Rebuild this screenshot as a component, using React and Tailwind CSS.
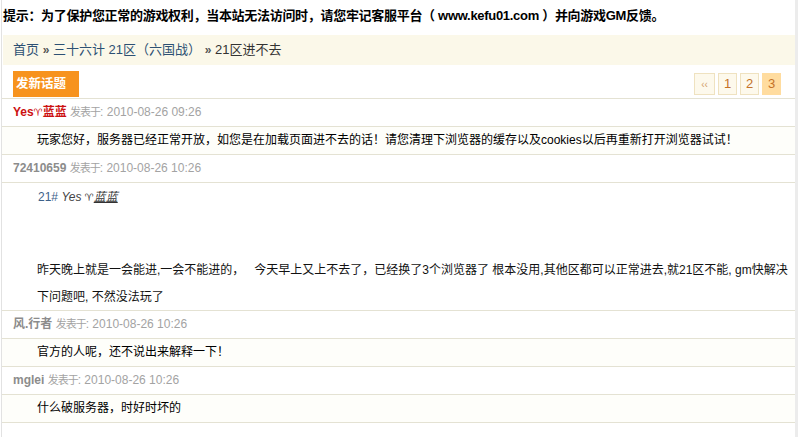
export default function App() {
  const font = "font-['Liberation_Sans','Noto_Sans_CJK_SC',sans-serif]";
  const line = "border-t border-[#e4e2d3]";
  const Aries = ({ cls }) => (
    <span className={`font-['DejaVu_Sans',sans-serif] text-[10px] ${cls}`}>{"\u2648\uFE0E"}</span>
  );
  const Header = ({ name, nameCls, time, children }) => (
    <div className={`${line} h-[28px] pl-[11px] text-[12px] leading-[27px] whitespace-nowrap`}>
      {children ? children : <span className={`font-bold ${nameCls}`}>{name}</span>}
      <span className="text-[#a3a3a3]">
        {" "}
        <span className="text-[11px] tracking-[-1px]">发表于</span>: {time}
      </span>
    </div>
  );
  const Content = ({ children }) => (
    <div className={`${line} h-[28px] bg-[#fefefa] pl-[35px] text-[12px] leading-[27px] text-black whitespace-nowrap`}>
      {children}
    </div>
  );
  return (
    <div className={`w-[798px] h-[437px] bg-white overflow-hidden ${font}`}>
      <div className="ml-[1px] w-[797px] h-[437px] border-l border-l-[#e2e2e2] border-r-[3px] border-r-[#ececec]">
        <div className="h-[35px] pl-[1px] text-[13px] font-bold leading-[32px] tracking-[-0.3px] text-black whitespace-nowrap">
          提示：为了保护您正常的游戏权利，当本站无法访问时，请您牢记客服平台（ www.kefu01.com ）并向游戏GM反馈。
        </div>
        <div className="ml-[1px] h-[30px] bg-[#fbf8e9] pl-[10px] text-[13px] leading-[30px] text-[#2d5073] whitespace-nowrap">
          <span>首页</span> <span className="text-[#555] text-[12px] font-bold">»</span>{" "}
          <span>三十六计 21区（六国战）</span> <span className="text-[#555] text-[12px] font-bold">»</span>{" "}
          <span className="text-[#333]">21区进不去</span>
        </div>
        <div className="h-[33px] flex justify-between items-start pl-[11px] pr-[14px]">
          <div className="mt-[6px] h-[26px] w-[66px] bg-[#f7931e] pl-[3px] text-[12.5px] font-bold leading-[26px] text-white whitespace-nowrap">
            发新话题
          </div>
          <div className="mt-[8px] flex h-[22px] gap-[3px] text-[13px]">
            <div className="flex h-[22px] w-[21px] items-center justify-center border border-[#efe2c0] bg-[#fdf9ec] text-[10px] text-[#d2a06a]">
              ‹‹
            </div>
            <div className="flex h-[22px] w-[19px] items-center justify-center border border-[#efe2c0] bg-[#fdf9ec] text-[#c47228]">
              1
            </div>
            <div className="flex h-[22px] w-[19px] items-center justify-center border border-[#efe2c0] bg-[#fdf9ec] text-[#c47228]">
              2
            </div>
            <div className="flex h-[22px] w-[19px] items-center justify-center bg-[#ffdc9f] text-[#c47228]">
              3
            </div>
          </div>
        </div>

        <Header time="2010-08-26 09:26">
          <span className="font-bold text-[#cc1111]">
            Yes<Aries cls="text-[#cc1111]" />蓝蓝
          </span>
        </Header>
        <Content>
          玩家您好，服务器已经正常开放，如您是在加载页面进不去的话！请您清理下浏览器的缓存以及cookies以后再重新打开浏览器试试！
        </Content>

        <Header name="72410659" nameCls="text-[#8c8c8c]" time="2010-08-26 10:26" />
        <div className={`${line} h-[128px] pl-[35px] text-[12px] whitespace-nowrap`}>
          <div className="mt-[4px] h-[20px] leading-[20px] pl-[1px]">
            <span className="text-[#3d6189]">21#</span>{" "}
            <span className="italic text-[#444]">Yes </span>
            <Aries cls="text-[#444]" />
            <span className="italic underline text-[#333]">蓝蓝</span>
          </div>
          <div className="mt-[50px] leading-[27px] text-[#111]">
            昨天晚上就是一会能进,一会不能进的，&nbsp;&nbsp; 今天早上又上不去了，已经换了3个浏览器了 根本没用,其他区都可以正常进去,就21区不能, gm快解决
            <br />
            下问题吧, 不然没法玩了
          </div>
        </div>

        <Header name="风.行者" nameCls="text-[#8c8c8c]" time="2010-08-26 10:26" />
        <Content>官方的人呢，还不说出来解释一下！</Content>

        <Header name="mglei" nameCls="text-[#8c8c8c]" time="2010-08-26 10:26" />
        <div className="border-b border-[#e4e2d3]">
          <Content>什么破服务器，时好时坏的</Content>
        </div>
      </div>
    </div>
  );
}
